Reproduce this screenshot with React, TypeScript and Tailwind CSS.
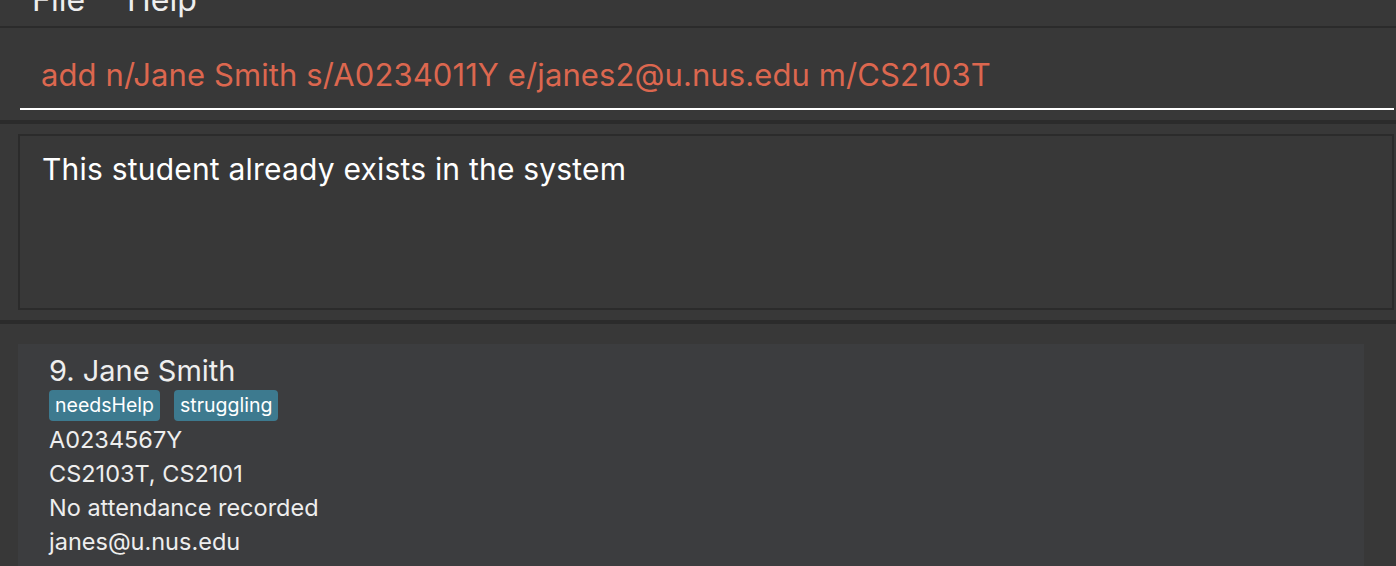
export default function App() {
    return (
        <div className="w-[1396px] h-[566px] overflow-hidden bg-[#383838] font-['Inter',sans-serif] text-white flex flex-col">
            {/* Menu bar */}
            <div className="h-[26px] shrink-0 overflow-hidden flex gap-[42px] pl-[32px]">
                <span className="text-[32px] leading-[32px] -mt-[16px] text-[#eeeeee]">File</span>
                <span className="text-[32px] leading-[32px] -mt-[16px] text-[#eeeeee]">Help</span>
            </div>
            <div className="h-[2px] shrink-0 bg-[#2b2b2b]"></div>

            {/* Command box */}
            <div className="h-[92px] shrink-0 flex flex-col pt-[29px] pl-[20px] pr-[2px]">
                <div className="pl-[21px] text-[31px] leading-[36px] tracking-[0.1px] text-[#dc674f] whitespace-nowrap">
                    add n/Jane Smith s/A0234011Y e/janes2@u.nus.edu m/CS2103T
                </div>
                <div className="mt-[15px] h-[2px] bg-white"></div>
            </div>
            <div className="h-[4px] shrink-0 bg-[#2b2b2b]"></div>

            {/* Result display */}
            <div className="h-[196px] shrink-0 pt-[10px] pb-[10px] pl-[18px] pr-[2px]">
                <div className="h-full border-2 border-[#2b2b2b] pt-[15px] pl-[22px]">
                    <p className="text-[30px] leading-[36px] tracking-[0.2px] text-white">
                        This student already exists in the system
                    </p>
                </div>
            </div>
            <div className="h-[4px] shrink-0 bg-[#2b2b2b]"></div>

            {/* Person list */}
            <div className="flex-1 pt-[20px] pl-[18px] pr-[32px]">
                <div className="h-full bg-[#3c3d3f] pt-[9px] pl-[31px] text-[#eeeeee]">
                    <div className="text-[29px] leading-[36px]">9. Jane Smith</div>
                    <div className="mt-[1px] flex gap-[14px]">
                        <span className="h-[31px] flex items-center px-[6px] rounded-[4px] bg-[#3d7a8f] text-[19.5px] text-white">needsHelp</span>
                        <span className="h-[31px] flex items-center px-[6px] rounded-[4px] bg-[#3d7a8f] text-[19.5px] text-white">struggling</span>
                    </div>
                    <div className="mt-[2px] text-[23.5px] leading-[34px]">
                        <div>A0234567Y</div>
                        <div>CS2103T, CS2101</div>
                        <div>No attendance recorded</div>
                        <div>janes@u.nus.edu</div>
                    </div>
                </div>
            </div>
        </div>
    );
}
